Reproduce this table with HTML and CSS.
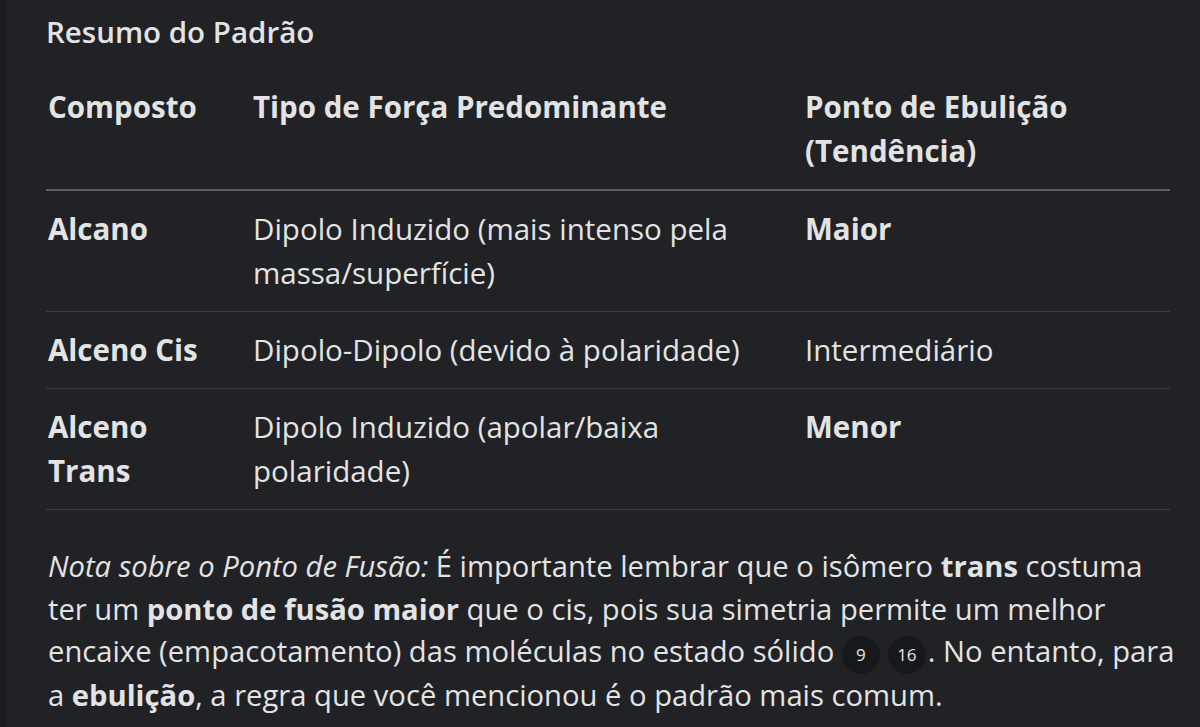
FILE: index.html
```html
<!DOCTYPE html>
<html lang="pt">
<head>
  <meta charset="UTF-8" />
  <meta name="viewport" content="width=device-width, initial-scale=1.0"/>
  <title>Resumo do Padrão</title>
  <link rel="stylesheet" href="styles.css">
</head>
<body>
  <div class="response">
    <h3>Resumo do Padrão</h3>

    <table class="summary">
      <thead>
        <tr>
          <th class="col-name">Composto</th>
          <th class="col-force">Tipo de Força Predominante</th>
          <th>Ponto de Ebulição (Tendência)</th>
        </tr>
      </thead>
      <tbody>
        <tr>
          <td><strong>Alcano</strong></td>
          <td>Dipolo Induzido (mais intenso pela massa/superfície)</td>
          <td><strong>Maior</strong></td>
        </tr>
        <tr>
          <td><strong>Alceno Cis</strong></td>
          <td>Dipolo-Dipolo (devido à polaridade)</td>
          <td>Intermediário</td>
        </tr>
        <tr>
          <td><strong>Alceno Trans</strong></td>
          <td>Dipolo Induzido (apolar/baixa polaridade)</td>
          <td><strong>Menor</strong></td>
        </tr>
      </tbody>
    </table>

    <p class="note">
      <em>Nota sobre o Ponto de Fusão:</em> É importante lembrar que o isômero <strong>trans</strong> costuma
      ter um <strong>ponto de fusão maior</strong> que o cis, pois sua simetria permite um melhor
      encaixe (empacotamento) das moléculas no estado sólido <span class="cite">9</span><span class="cite">16</span>. No entanto, para
      a <strong>ebulição</strong>, a regra que você mencionou é o padrão mais comum.
    </p>
  </div>
</body>
</html>
```

FILE: styles.css
```css
body {
  margin: 0;
  background-color: #202226;
  color: #e3e3e3;
  font-family: "Open Sans", "Liberation Sans", sans-serif;
  font-size: 29.5px;
}
.response {
  border-left: 7px solid #1b1c1f;
  padding: 10px 20px 0 39px;
  height: 717px;
  overflow: hidden;
}
h3 {
  margin: 0 0 15px 0;
  font-size: 29.5px;
  font-weight: 600;
  line-height: 44px;
}
.summary {
  width: 1124px;
  table-layout: fixed;
  border-collapse: collapse;
  line-height: 44px;
}
.summary th,
.summary td {
  text-align: left;
  vertical-align: top;
  padding: 16px 20px 16px 2px;
  border-bottom: 1px solid #3a3c40;
}
.summary th {
  font-weight: 700;
  border-bottom: 2px solid #5d6064;
}
.summary strong {
  font-weight: 700;
}
.col-name {
  width: 183px;
}
.col-force {
  width: 530px;
}
.note {
  margin: 35px 0 0 0;
  font-size: 29.2px;
  line-height: 42.7px;
  padding-left: 2px;
}
.note strong {
  font-weight: 700;
}
.cite {
  display: inline-block;
  width: 38px;
  height: 38px;
  margin-right: 8px;
  border-radius: 50%;
  background-color: #17181b;
  font-size: 17px;
  line-height: 38px;
  text-align: center;
  vertical-align: middle;
}
.cite + .cite {
  margin-right: 2px;
}
```
